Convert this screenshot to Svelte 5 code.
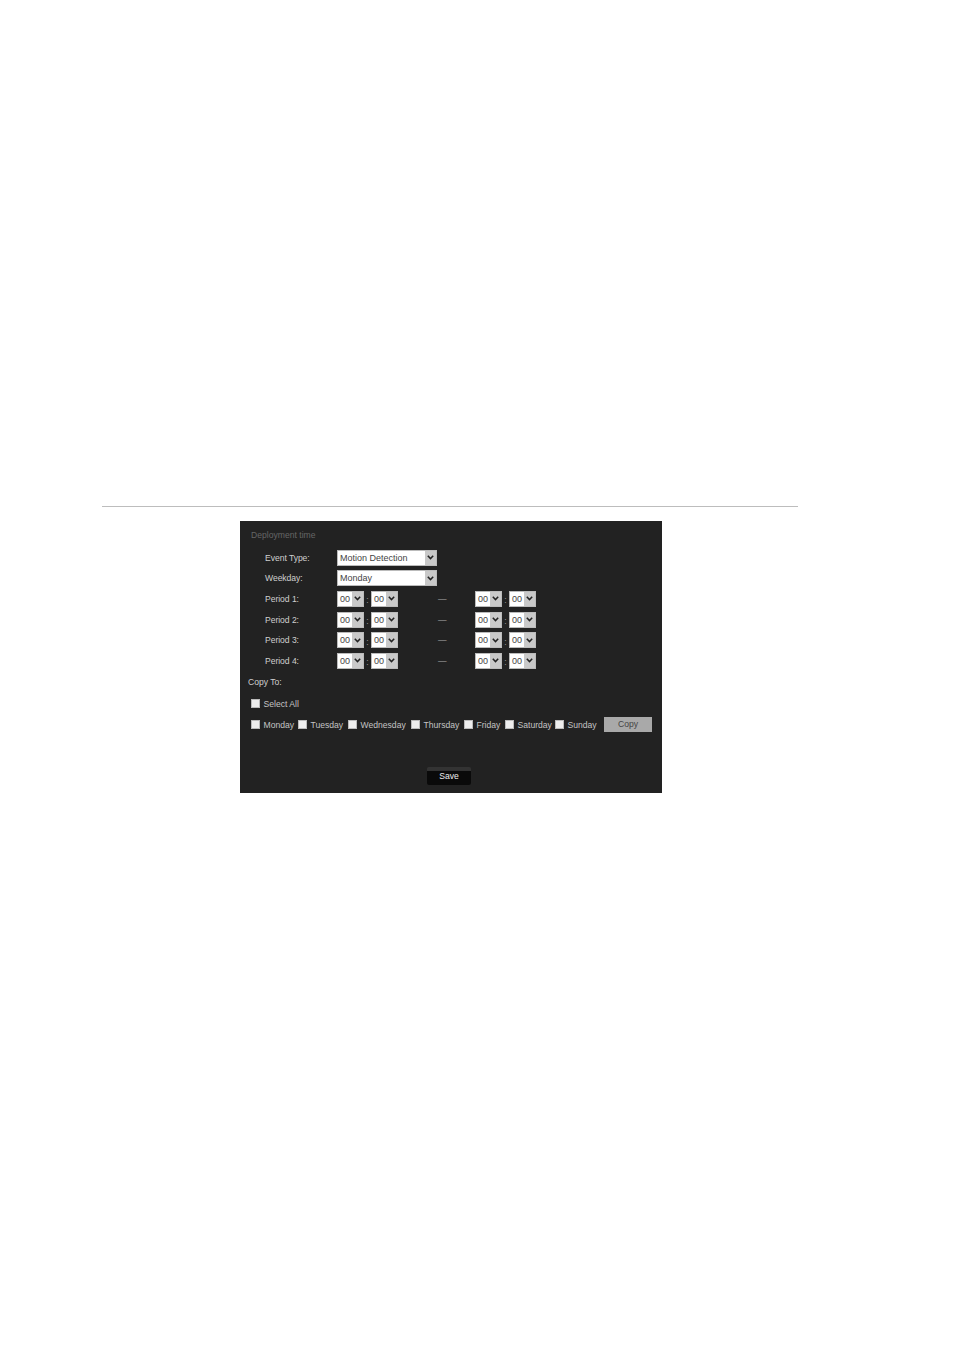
<script>
	const periods = ['Period 1:', 'Period 2:', 'Period 3:', 'Period 4:'];
	const days = [
		{ name: 'Monday', width: 47 },
		{ name: 'Tuesday', width: 50 },
		{ name: 'Wednesday', width: 63 },
		{ name: 'Thursday', width: 53 },
		{ name: 'Friday', width: 41 },
		{ name: 'Saturday', width: 50 },
		{ name: 'Sunday', width: 49 }
	];
</script>

{#snippet arrow()}
	<span class="arrow">
		<svg width="7" height="5" viewBox="0 0 7 5"><path d="M0.8 0.8 L3.5 3.6 L6.2 0.8" fill="none" stroke="#222" stroke-width="1.5" /></svg>
	</span>
{/snippet}

{#snippet time()}
	<div class="select small"><span class="value">00</span>{@render arrow()}</div>
{/snippet}

{#snippet pair()}
	<div class="pair">
		{@render time()}
		<span class="colon">:</span>
		{@render time()}
	</div>
{/snippet}

<div class="page">
	<hr class="rule" />
	<div class="panel">
		<div class="title">Deployment time</div>

		<div class="form">
			<div class="row">
				<span class="label">Event Type:</span>
				<div class="select wide"><span class="value">Motion Detection</span>{@render arrow()}</div>
			</div>
			<div class="row">
				<span class="label">Weekday:</span>
				<div class="select wide"><span class="value">Monday</span>{@render arrow()}</div>
			</div>
			{#each periods as period}
				<div class="row">
					<span class="label">{period}</span>
					{@render pair()}
					<span class="dash">—</span>
					{@render pair()}
				</div>
			{/each}
		</div>

		<div class="copy-to">Copy To:</div>

		<div class="check-row all">
			<div class="day">
				<span class="check"></span>
				<span class="check-label">Select All</span>
			</div>
		</div>

		<div class="check-row">
			{#each days as day}
				<div class="day" style="width: {day.width}px">
					<span class="check"></span>
					<span class="check-label">{day.name}</span>
				</div>
			{/each}
			<div class="copy">Copy</div>
		</div>

		<div class="save">Save</div>
	</div>
</div>

<style>
	:global(body) {
		margin: 0;
		background: #fff;
	}

	.page {
		height: 1350px;
		padding-top: 506px;
		box-sizing: border-box;
		font-family: "Liberation Sans", Arial, sans-serif;
		overflow: hidden;
	}

	.rule {
		width: 696px;
		height: 1px;
		margin: 0 0 14px 102px;
		border: 0;
		background: #bdbdbd;
	}

	.panel {
		width: 422px;
		height: 272px;
		margin-left: 240px;
		box-sizing: border-box;
		padding: 9px 0 0 8px;
		background: #222;
		color: #cfcfcf;
		font-size: 8.6px;
		position: relative;
	}

	.title {
		height: 11px;
		line-height: 11px;
		margin-left: 3px;
		color: #666;
	}

	.form {
		margin-top: 8.5px;
		display: flex;
		flex-direction: column;
		gap: 4.7px;
		padding-left: 17px;
	}

	.row {
		display: flex;
		align-items: center;
		height: 16px;
	}

	.label {
		width: 72px;
		letter-spacing: -0.05px;
	}

	.select {
		display: flex;
		height: 16px;
		box-sizing: border-box;
		background: #fff;
		color: #444;
		border: 1px solid #bbb;
		font-size: 9px;
	}

	.select.wide {
		width: 100px;
	}

	.select.small {
		width: 27px;
	}

	.value {
		flex: 1;
		padding-left: 2px;
		line-height: 14px;
		white-space: nowrap;
		overflow: hidden;
	}

	.arrow {
		width: 11px;
		display: flex;
		align-items: center;
		justify-content: center;
		background: #c9c9c9;
	}

	.pair {
		display: flex;
		align-items: center;
		width: 61px;
	}

	.colon {
		width: 7px;
		text-align: center;
		color: #999;
		padding-top: 3px;
	}

	.dash {
		width: 77px;
		padding-left: 40px;
		box-sizing: border-box;
		color: #aaa;
	}

	.copy-to {
		margin-top: 8.5px;
		height: 11px;
		line-height: 11px;
	}

	.check-row {
		display: flex;
		align-items: center;
		height: 16px;
		margin-top: 5px;
		padding-left: 3px;
	}

	.check-row.all {
		margin-top: 7px;
	}

	.day {
		display: flex;
		align-items: center;
		flex: none;
	}

	.check {
		width: 9px;
		height: 9px;
		margin-right: 3.5px;
		box-sizing: border-box;
		background: #eee;
		border: 1px solid #bbb;
		flex: none;
	}

	.check-label {
		color: #c4c4c4;
		white-space: nowrap;
		padding-top: 1px;
	}

	.copy {
		position: absolute;
		left: 364px;
		top: 196px;
		width: 48px;
		height: 15px;
		line-height: 15px;
		text-align: center;
		background: #a9a9a9;
		color: #444;
	}

	.save {
		position: absolute;
		left: 187px;
		top: 246px;
		width: 44px;
		height: 18px;
		line-height: 19px;
		text-align: center;
		color: #eee;
		border-radius: 2px;
		background: linear-gradient(#333 0 4px, #0a0a0a 4px);
	}
</style>
